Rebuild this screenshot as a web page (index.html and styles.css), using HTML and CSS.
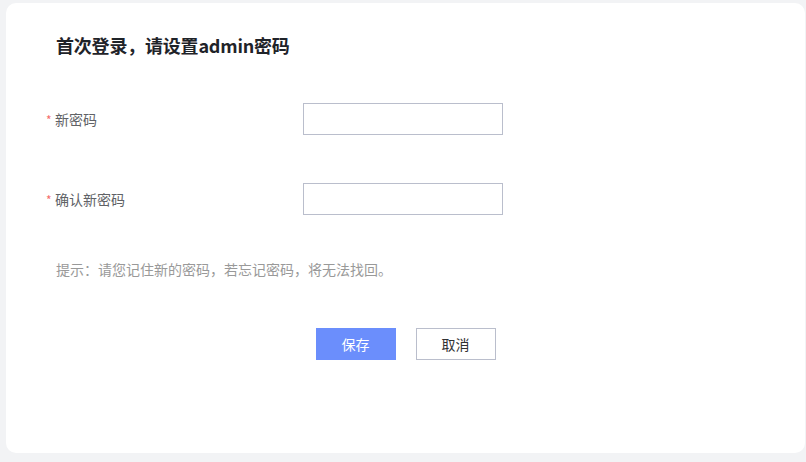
FILE: index.html
```html
<!DOCTYPE html>
<html lang="zh-CN">
<head>
    <meta charset="UTF-8">
    <meta name="viewport" content="width=device-width, initial-scale=1.0">
    <title>设置admin密码</title>
    <link rel="stylesheet" href="styles.css">
</head>
<body>
    <div class="page">
        <div class="card">
            <h1 class="title">首次登录，请设置admin密码</h1>

            <form class="form" onsubmit="return false">
                <div class="form-row">
                    <label class="form-label" for="newPwd"><span class="required">*</span>新密码</label>
                    <input class="form-input" type="password" id="newPwd">
                </div>
                <div class="form-row">
                    <label class="form-label" for="confirmPwd"><span class="required">*</span>确认新密码</label>
                    <input class="form-input" type="password" id="confirmPwd">
                </div>

                <p class="hint">提示：请您记住新的密码，若忘记密码，将无法找回。</p>

                <div class="actions">
                    <button class="btn btn-primary" type="submit">保存</button>
                    <button class="btn btn-default" type="button">取消</button>
                </div>
            </form>
        </div>
    </div>
</body>
</html>
```

FILE: styles.css
```css
* {
    margin: 0;
    padding: 0;
    box-sizing: border-box;
    font-family: "Noto Sans CJK SC", "Noto Sans", sans-serif;
}

body {
    background: #f2f3f5;
    width: 806px;
    height: 462px;
    overflow: hidden;
}

.page {
    padding: 3px 1px 9px 6px;
    height: 100%;
}

.card {
    background: #fff;
    border-radius: 10px;
    height: 100%;
    padding: 30px 0 0 40px;
}

.title {
    font-size: 18px;
    font-weight: bold;
    color: #1f2329;
    line-height: 24px;
    margin-left: 10px;
    letter-spacing: -0.2px;
}

.form {
    margin-top: 46px;
}

.form-row {
    display: flex;
    align-items: center;
    height: 32px;
    margin-bottom: 48px;
}

.form-label {
    width: 257px;
    font-size: 14px;
    color: #606266;
    display: flex;
    align-items: center;
}

.required {
    color: #f56c6c;
    width: 9px;
    font-size: 12px;
}

.form-input {
    width: 200px;
    height: 32px;
    border: 1px solid #babecc;
    border-radius: 0;
    outline: none;
    padding: 0 8px;
    font-size: 14px;
}

.form-input:focus {
    border-color: #6b8efc;
}

.hint {
    font-size: 14px;
    line-height: 20px;
    color: #999;
    margin: -4px 0 0 10px;
}

.actions {
    display: flex;
    justify-content: center;
    gap: 20px;
    margin: 49px 0 0 -40px;
}

.btn {
    width: 80px;
    height: 32px;
    font-size: 14px;
    cursor: pointer;
    border-radius: 0;
}

.btn-primary {
    background: #6b8efc;
    color: #fff;
    border: none;
}

.btn-default {
    background: #fff;
    color: #303133;
    border: 1px solid #babecc;
}
```
